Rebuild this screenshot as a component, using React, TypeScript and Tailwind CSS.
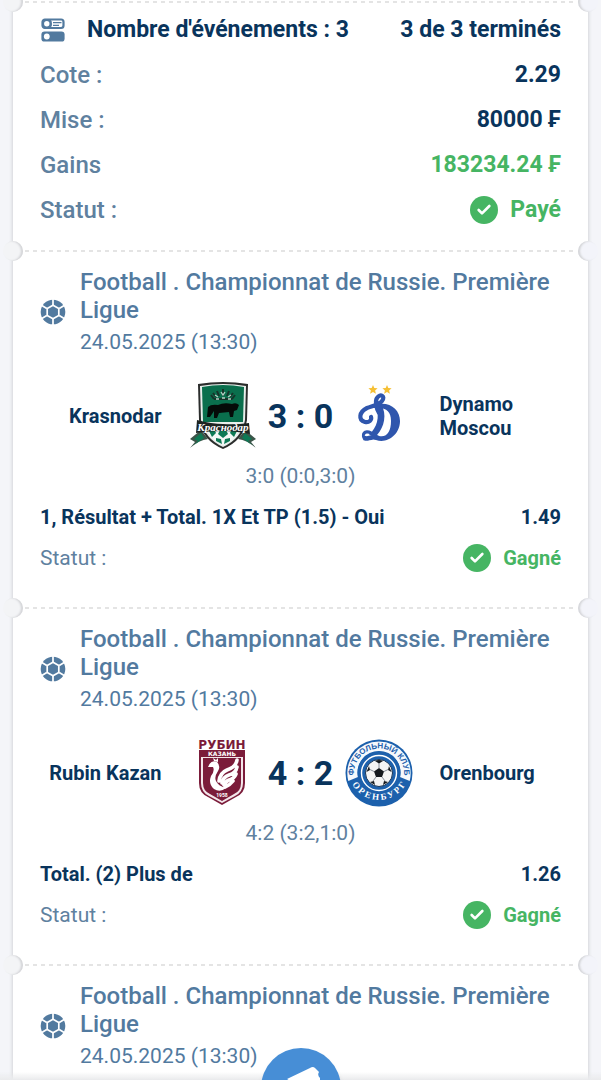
import { Check } from 'lucide-react';
import type { ReactNode } from 'react';

type Team = { name: string; logo: ReactNode };

type BetEvent = {
  id: number;
  league: string;
  date: string;
  home?: Team;
  away?: Team;
  score?: string;
  periods?: string;
  pick?: string;
  odds?: string;
  status?: string;
};

function KrasnodarLogo() {
  return (
    <svg viewBox="0 0 68 68" className="size-[68px]" aria-hidden="true">
      <path d="M9 2 Q34 -2 59 2 L58 38 Q55 58 34 67 Q13 58 10 38Z" fill="#2b2d2c" />
      <path d="M11 4 Q34 0 57 4 L56 38 Q53 56 34 65 Q15 56 12 38Z" fill="#e9efec" />
      <path d="M13 5 Q34 1 55 5 L54 40 L14 40Z" fill="#0a6f4d" />
      <path
        d="M24 11 l3 4 M28 9 l2 5 M34 7 v7 M40 9 l-2 5 M44 11 l-3 4 M22 13 l3 4 M46 13 l-3 4 M25 17 h18"
        stroke="#16342a"
        strokeWidth="2"
        fill="none"
      />
      <path d="M26 13 l3 2 M32 10 l2 3 2-3 M42 13 l-3 2 M27 17 h3 M33 16 h3 M39 17 h3" stroke="#b5d2c5" strokeWidth="1.3" fill="none" />
      <path d="M19 25 Q22 22 29 23 Q35 20 43 22 Q47 20 50 23 L48 28 L45 29 L44 35 L41 35 L40 30 L30 31 L28 36 L25 36 L25 29 L21 35 L18 35Z" fill="#050b08" />
      <path d="M18 47 Q34 42 50 47 Q47 58 34 63 Q21 58 18 47Z" fill="#f4f8f6" />
      <path d="M31 48 l6 0 2 4 -5 4 -5-4z M20 49 l5-2 2 4 -4 4z M48 49 l-5-2 -2 4 4 4z M27 56 l5 1 1 5 -6-3z M41 56 l-5 1 -1 5 6-3z" fill="#0d7a55" />
      <path d="M1 66 L6 60 L1 57 L12 48 L19 57 Q10 58 1 66Z M67 66 L62 60 L67 57 L56 48 L49 57 Q58 58 67 66Z" fill="#3b5549" />
      <path d="M5 63 L9 59 L5 57 L12 51 L15 56Z M63 63 L59 59 L63 57 L56 51 L53 56Z" fill="#0d7a55" />
      <path d="M8 38 Q23 42 34 42 Q46 43 60 41 L61 52 Q46 49 34 49 Q20 49 7 51Z" fill="#1d2422" />
      <text x="34" y="48.5" fontSize="11" fontFamily="Liberation Serif, serif" fontStyle="italic" fontWeight="700" fill="#ffffff" textAnchor="middle">
        Краснодар
      </text>
    </svg>
  );
}

function DynamoLogo() {
  return (
    <svg viewBox="0 0 68 68" className="size-[68px]" aria-hidden="true">
      <path
        d="M28 3 l1.3 3 3.3.3-2.5 2.1.8 3.3-2.9-1.8-2.9 1.8.8-3.3-2.5-2.1 3.3-.3z M42 3 l1.3 3 3.3.3-2.5 2.1.8 3.3-2.9-1.8-2.9 1.8.8-3.3-2.5-2.1 3.3-.3z"
        fill="#f6c034"
      />
      <path
        d="M34 31 C31 26 30 19 32 16 C35 11 41 14 37 19 C34 23 27 24 22 26 C14 30 13 38 20 40 C24 41 27 38 26 35"
        fill="none"
        stroke="#2f56ad"
        strokeWidth="4.2"
        strokeLinecap="round"
      />
      <path
        d="M33 22 C46 20 55 28 55 39 C55 52 43 62 31 58 C26 56 23 60 18 58 L20 54 C25 55 29 51 34 54 C42 56 46 49 46 39 C46 30 42 26 33 26Z"
        fill="#2f56ad"
      />
      <path d="M31 24 L38 26 C42 37 37 49 30 55 L24 53 C32 45 35 36 31 24Z" fill="#2f56ad" />
      <path
        d="M30 54 C24 48 18 49 18.5 54 C19 58 25 58 30 54"
        fill="none"
        stroke="#2f56ad"
        strokeWidth="3.2"
        strokeLinecap="round"
      />
    </svg>
  );
}

function RubinLogo() {
  return (
    <svg viewBox="0 0 68 68" className="size-[68px]" aria-hidden="true">
      <text x="33" y="10" fontSize="12" fontFamily="DejaVu Sans, sans-serif" fontWeight="700" fill="#7b1c3a" textAnchor="middle">
        РУБИН
      </text>
      <path d="M10 11 H56 V44 Q56 54 47 58 L33 66 L19 58 Q10 54 10 44Z" fill="#7b1c3a" />
      <path d="M12 18 H54 V44 Q54 53 46 57 L33 64 L20 57 Q12 53 12 44Z" fill="#f3e6ea" />
      <path d="M14 19 H52 V44 Q52 52 45 55 L33 62 L21 55 Q14 52 14 44Z" fill="#7b1c3a" />
      <text x="33" y="17" fontSize="6" fontFamily="DejaVu Sans, sans-serif" fontWeight="700" fill="#ffffff" textAnchor="middle">
        КАЗАНЬ
      </text>
      <path d="M19 28 Q22 20 28 23 Q32 27 29 32 Q25 38 27 42 Q29 47 37 49 Q31 54 25 50 Q19 45 22 37 Q26 32 24 28Z" fill="#ffffff" />
      <path d="M25 22 l-1-3 3 2 2-2 0 4z" fill="#ffffff" />
      <path
        d="M48 21 Q47 28 38 31 Q31 34 30 42 M48 28 Q47 34 40 36 Q34 38 33 44 M47 35 Q45 40 40 41 Q37 42 35 46 M44 42 Q41 46 36 48"
        fill="none"
        stroke="#ffffff"
        strokeWidth="3.6"
        strokeLinecap="round"
      />
      <text x="33" y="58" fontSize="5" fontFamily="Roboto, sans-serif" fontWeight="700" fill="#ffffff" textAnchor="middle">
        1958
      </text>
    </svg>
  );
}

function OrenburgLogo() {
  return (
    <svg viewBox="0 0 68 68" className="size-[68px]" aria-hidden="true">
      <defs>
        <path id="orenburg-top" d="M10.5 43 A25 25 0 1 1 57.5 43" />
        <path id="orenburg-bottom" d="M4 36 A30.5 30.5 0 0 0 64 36" />
      </defs>
      <circle cx="34" cy="34" r="33.5" fill="#1c60ac" />
      <path d="M3.3 42 A31.7 31.7 0 1 1 64.7 42 L55 38 A21.5 21.5 0 1 0 13 38Z" fill="#f6f9fc" />
      <circle cx="34" cy="34" r="21.5" fill="#1c60ac" />
      <circle cx="34" cy="34" r="17.5" fill="none" stroke="#ffffff" strokeWidth="1.4" />
      <text fontSize="8" fontFamily="Liberation Sans, sans-serif" fontWeight="700" fill="#1c60ac" textAnchor="middle">
        <textPath href="#orenburg-top" startOffset="50%">ФУТБОЛЬНЫЙ КЛУБ</textPath>
      </text>
      <text fontSize="9" fontFamily="Liberation Serif, serif" fontWeight="700" fill="#ffffff" textAnchor="middle">
        <textPath href="#orenburg-bottom" startOffset="50%">О Р Е Н Б У Р Г</textPath>
      </text>
      <circle cx="34" cy="34" r="13.5" fill="#f4f4f4" stroke="#183455" strokeWidth="1" />
      <path d="M34 29 L39 32.5 L37 38 L31 38 L29 32.5Z" fill="#14181d" />
      <path d="M30 22 Q34 20 38 22 L34 24.5Z M44 27 L46.5 33 L43 31Z M24 27 L21.5 33 L25 31Z M25 43 L30 46 L29 42Z M43 43 L38 46 L39 42Z" fill="#14181d" />
      <path d="M34 29V24 M39 32.5l4-2 M37 38l3 4 M31 38l-3 4 M29 32.5l-4-2" stroke="#6b7280" strokeWidth="0.8" />
    </svg>
  );
}

function FootballIcon() {
  return (
    <svg viewBox="0 0 26 26" className="size-[26px] shrink-0" aria-hidden="true">
      <circle cx="13" cy="13" r="12.3" fill="#527a9f" />
      <path d="M13 6.2 L18.8 9.6 V16.4 L13 19.8 L7.2 16.4 V9.6Z" fill="#527a9f" stroke="#ffffff" strokeWidth="1.7" />
      <path
        d="M13 6V0 M19.2 9.4L25 6 M19.2 16.6L25 20 M13 20V26 M6.8 16.6L1 20 M6.8 9.4L1 6"
        stroke="#ffffff"
        strokeWidth="1.7"
      />
    </svg>
  );
}

function EventsIcon() {
  return (
    <svg viewBox="0 0 24 24" className="mx-px size-6 shrink-0" aria-hidden="true">
      <rect x="1.5" y="1.5" width="21" height="8.5" rx="2.4" fill="#ffffff" stroke="#527a9f" strokeWidth="2.2" />
      <path d="M3 1 H9 Q11.5 3 11 5.7 Q11.5 8.5 9 10.5 H3 Q1 9 1 5.7 Q1 2.5 3 1Z" fill="#527a9f" />
      <circle cx="5.8" cy="5.7" r="2.7" fill="#ffffff" />
      <path d="M12 4.6H20.5 M12 7.3H18" stroke="#527a9f" strokeWidth="1.2" />
      <rect x="0.4" y="13.4" width="23.2" height="10.2" rx="3.2" fill="#527a9f" />
      <circle cx="5.8" cy="18.5" r="2.9" fill="#ffffff" />
    </svg>
  );
}

function Divider() {
  return (
    <div className="relative h-0.5">
      <div className="mx-3 h-full bg-[repeating-linear-gradient(to_right,#e4e4e4_0_4px,transparent_4px_8px)]" />
      {/* Ticket notches */}
      <div className="absolute -top-[9px] -left-2.5 h-5 w-5 rounded-full bg-[#f3f4f6] shadow-[inset_-2px_0_2px_#d4d5d8]" />
      <div className="absolute -top-[9px] -right-2.5 h-5 w-5 rounded-full bg-[#f3f4fa] shadow-[inset_2px_0_2px_#d4d5d8]" />
    </div>
  );
}

function StatusBadge({ label, className }: { label: string; className: string }) {
  return (
    <span className={`flex items-center gap-3 font-bold text-[#46b563] ${className}`}>
      <span className="flex size-7 items-center justify-center rounded-full bg-[#46b563]">
        <Check size={16} strokeWidth={4} className="text-white" />
      </span>
      {label}
    </span>
  );
}

function SummaryRow({ label, children }: { label: string; children: ReactNode }) {
  return (
    <div className="flex h-[45px] items-center justify-between">
      <dt className="text-2xl leading-8 font-medium text-[#5f819f]">{label}</dt>
      <dd className="leading-8 font-bold">{children}</dd>
    </div>
  );
}

function EventCard({ event }: { event: BetEvent }) {
  return (
    <article className="px-[27px] pt-4 pb-[35px]">
      <header className="flex items-center gap-3.5">
        <FootballIcon />
        <div className="text-[#527a9f]">
          <h2 className="text-2xl leading-7 font-medium">{event.league}</h2>
          <p className="mt-1 text-[21px] leading-7">{event.date}</p>
        </div>
      </header>

      {event.home && event.away && (
        <>
          <div className="mt-6 flex h-18 items-center">
            <p className="flex-1 pr-[27px] text-right text-xl leading-6 font-bold">{event.home.name}</p>
            {event.home.logo}
            <p className="w-[88px] text-center text-[34px] leading-10 font-bold">{event.score}</p>
            {event.away.logo}
            <p className="flex-1 pl-[27px] text-xl leading-6 font-bold">{event.away.name}</p>
          </div>
          <p className="mt-2.5 text-center text-[21px] leading-7 text-[#5f819f]">{event.periods}</p>
          <div className="mt-[13px] flex justify-between text-xl leading-7 font-bold">
            <p>{event.pick}</p>
            <p>{event.odds}</p>
          </div>
          <div className="mt-[13px] flex items-center justify-between leading-7">
            <span className="text-[21px] text-[#5f819f]">Statut :</span>
            <StatusBadge label={event.status ?? ''} className="text-xl" />
          </div>
        </>
      )}
    </article>
  );
}

const league = 'Football . Championnat de Russie. Première Ligue';

const events: BetEvent[] = [
  {
    id: 1,
    league,
    date: '24.05.2025 (13:30)',
    home: { name: 'Krasnodar', logo: <KrasnodarLogo /> },
    away: { name: 'Dynamo Moscou', logo: <DynamoLogo /> },
    score: '3 : 0',
    periods: '3:0 (0:0,3:0)',
    pick: '1, Résultat + Total. 1X Et TP (1.5) - Oui',
    odds: '1.49',
    status: 'Gagné',
  },
  {
    id: 2,
    league,
    date: '24.05.2025 (13:30)',
    home: { name: 'Rubin Kazan', logo: <RubinLogo /> },
    away: { name: 'Orenbourg', logo: <OrenburgLogo /> },
    score: '4 : 2',
    periods: '4:2 (3:2,1:0)',
    pick: 'Total. (2) Plus de',
    odds: '1.26',
    status: 'Gagné',
  },
  { id: 3, league, date: '24.05.2025 (13:30)' },
];

export default function App() {
  return (
    <div className="min-h-screen bg-[#f4f5f9] px-[13px] font-[Roboto,sans-serif] text-[#09345c]">
      <main className="flex min-h-screen flex-col bg-white pt-px shadow-[0_0_4px_#c4c5c9]">
        <Divider />
        <section className="px-[27px] pt-1 pb-[18px] text-[23px] leading-8">
          <div className="flex h-[45px] items-center justify-between font-bold">
            <div className="flex items-center gap-[21px]">
              <EventsIcon />
              <h1>Nombre d'événements : 3</h1>
            </div>
            <p>3 de 3 terminés</p>
          </div>
          <dl>
            <SummaryRow label="Cote :">2.29</SummaryRow>
            <SummaryRow label="Mise :">80000 ₣</SummaryRow>
            <SummaryRow label="Gains">
              <span className="text-[#46b563]">183234.24 ₣</span>
            </SummaryRow>
            <SummaryRow label="Statut :">
              <StatusBadge label="Payé" className="text-[23px]" />
            </SummaryRow>
          </dl>
        </section>

        {events.map((event) => (
          <div key={event.id} className="last:-mb-9">
            <Divider />
            <EventCard event={event} />
          </div>
        ))}
      </main>

      <nav className="fixed inset-x-0 bottom-0 flex h-8 justify-center overflow-hidden bg-linear-to-b from-transparent from-75% to-[#e9eaec]">
        <button
          type="button"
          aria-label="Coupon"
          className="flex size-20 shrink-0 justify-center rounded-full bg-[#478ed6] pt-4 shadow-md"
        >
          <svg viewBox="0 0 40 30" className="h-[30px] w-10" aria-hidden="true">
            <path
              d="M6 15 L29 4 Q32 2 34 4 L38 8 Q36 11 39 14 V30 H8 L6 20 Q10 17 6 15Z M1 17 L4 19 V24Z"
              fill="#ffffff"
            />
          </svg>
        </button>
      </nav>
    </div>
  );
}
